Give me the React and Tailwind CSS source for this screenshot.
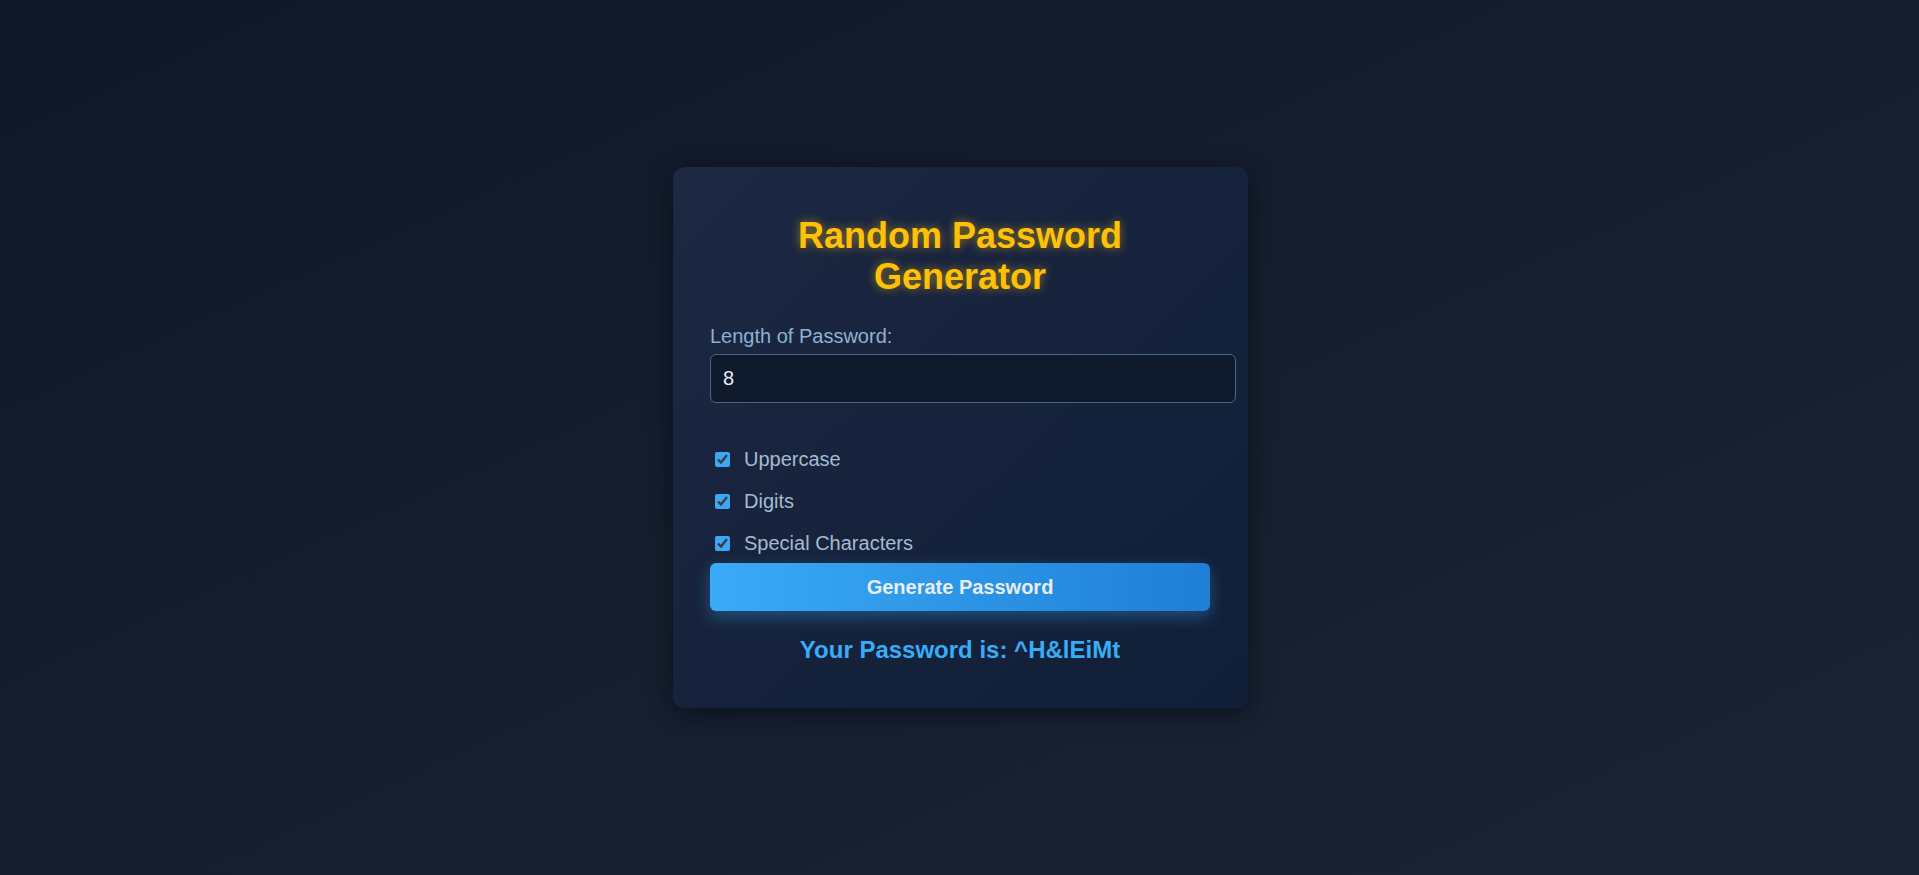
import React from "react";

export default function App() {
  const options = ["Uppercase", "Digits", "Special Characters"];
  return (
    <div
      className="min-h-screen w-full flex items-center justify-center bg-gradient-to-br from-[#0f1829] to-[#1b2435]"
      style={{ fontFamily: '"Liberation Sans", Arial, sans-serif' }}
    >
      <div className="ml-[2px] w-[575px] h-[541px] rounded-xl bg-gradient-to-br from-[#1d2842] to-[#101e38] shadow-[0_6px_24px_rgba(0,0,0,0.45)] pl-[37px] pr-[38px] pt-[38px]">
        <h1 className="mt-[10px] text-center text-[36px] leading-[41px] font-bold text-[#ffc107] [text-shadow:0_0_10px_rgba(255,193,7,0.55)]">
          Random Password Generator
        </h1>
        <label className="block mt-[28px] text-[20px] leading-[23px] text-[#8fb1d0]">
          Length of Password:
        </label>
        <input
          type="number"
          defaultValue={8}
          className="block mt-[6px] w-[526px] h-[49px] px-[12px] rounded-md border border-[#4a6686] bg-[#0e1a2c] text-[20px] text-[#e6edf5] outline-none"
        />
        <div className="mt-[45px] flex flex-col gap-[19px]">
          {options.map((o) => (
            <label key={o} className="flex items-center h-[23px] text-[20px] leading-[23px] text-[#a5bbd0]">
              <input
                type="checkbox"
                defaultChecked
                className="ml-[5px] mr-[14px] w-[15px] h-[15px] accent-[#3aa8f5]"
              />
              {o}
            </label>
          ))}
        </div>
        <button className="mt-[8px] w-[500px] h-[48px] rounded-md bg-gradient-to-r from-[#3aabf8] to-[#1f7fd5] text-[20px] font-bold text-[#e8edf3] shadow-[0_6px_16px_rgba(56,170,248,0.35)]">
          Generate Password
        </button>
        <div className="mt-[25px] text-center text-[24px] leading-[28px] font-bold text-[#38acf7]">
          Your Password is: ^H&amp;lEiMt
        </div>
      </div>
    </div>
  );
}
